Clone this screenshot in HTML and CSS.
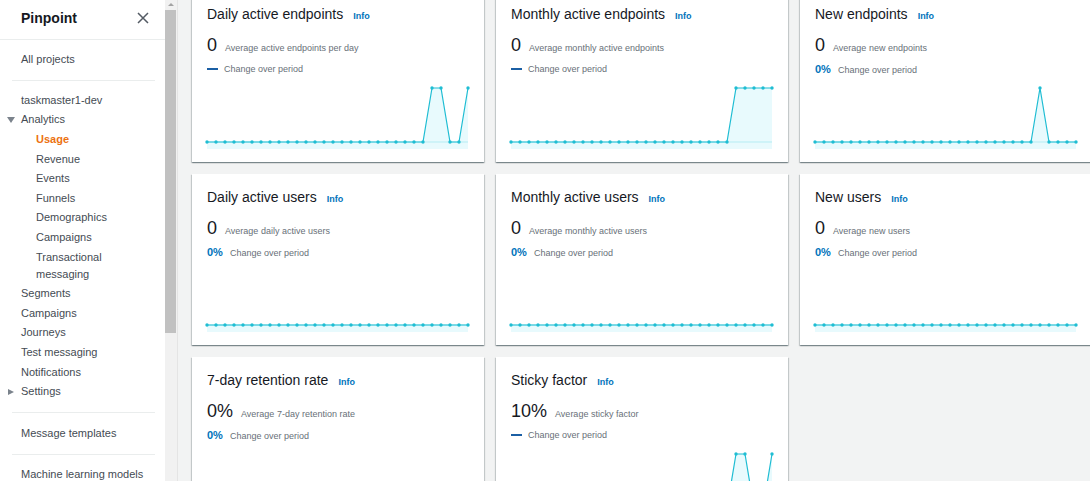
FILE: index.html
```html
<!DOCTYPE html>
<html lang="en">
<head>
<meta charset="utf-8">
<title>Pinpoint - Usage</title>
<link rel="stylesheet" href="styles.css">
</head>
<body>
<svg class="defs" width="0" height="0" aria-hidden="true">
  <defs>
    <marker id="dot" viewBox="0 0 4 4" refX="2" refY="2" markerWidth="3.4" markerHeight="3.4" markerUnits="userSpaceOnUse">
      <circle cx="2" cy="2" r="2" fill="#1fbdd3"/>
    </marker>
  </defs>
</svg>
<div class="app">
  <aside class="sidebar">
    <div class="side-head">
      <span class="brand">Pinpoint</span>
      <svg class="close" width="12" height="12" viewBox="0 0 12 12"><path d="M1 1 L11 11 M11 1 L1 11" stroke="#545b64" stroke-width="1.5" fill="none"/></svg>
    </div>
    <div class="side-sec">
      <div class="nav">All projects</div>
    </div>
    <div class="side-div"></div>
    <div class="side-sec">
      <div class="nav">taskmaster1-dev</div>
      <div class="nav nav-group"><span class="caret caret-down"></span>Analytics</div>
      <div class="nav sub active">Usage</div>
      <div class="nav sub">Revenue</div>
      <div class="nav sub">Events</div>
      <div class="nav sub">Funnels</div>
      <div class="nav sub">Demographics</div>
      <div class="nav sub">Campaigns</div>
      <div class="nav sub">Transactional messaging</div>
      <div class="nav">Segments</div>
      <div class="nav">Campaigns</div>
      <div class="nav">Journeys</div>
      <div class="nav">Test messaging</div>
      <div class="nav">Notifications</div>
      <div class="nav nav-group"><span class="caret caret-right"></span>Settings</div>
    </div>
    <div class="side-div"></div>
    <div class="side-sec sec-wide">
      <div class="nav">Message templates</div>
    </div>
    <div class="side-div"></div>
    <div class="side-sec">
      <div class="nav">Machine learning models</div>
    </div>
  </aside>
  <div class="scrollbar">
    <div class="sb-arrow"></div>
    <div class="sb-thumb"></div>
  </div>
  <main class="main">
    <div class="grid">
      <section class="card">
        <div class="card-title"><h2>Daily active endpoints</h2><span class="info">Info</span></div>
        <div class="metric"><span class="big">0</span><span class="sub-label">Average active endpoints per day</span></div>
        <div class="change"><span class="dash"></span><span class="sub-label">Change over period</span></div>
        <svg class="chart" width="261" height="63" viewBox="0 0 261 63">
          <polygon class="area" points="0,63 0,56 9,56 18,56 27,56 36,56 45,56 54,56 63,56 72,56 81,56 90,56 99,56 108,56 117,56 126,56 135,56 144,56 153,56 162,56 171,56 180,56 189,56 198,56 207,56 216,56 225,2 234,2 243,56 252,56 261,2 261,63"/>
          <line class="zero" x1="0" y1="56" x2="261" y2="56"/>
          <polyline class="series" points="0,56 9,56 18,56 27,56 36,56 45,56 54,56 63,56 72,56 81,56 90,56 99,56 108,56 117,56 126,56 135,56 144,56 153,56 162,56 171,56 180,56 189,56 198,56 207,56 216,56 225,2 234,2 243,56 252,56 261,2"/>
        </svg>
      </section>
      <section class="card">
        <div class="card-title"><h2>Monthly active endpoints</h2><span class="info">Info</span></div>
        <div class="metric"><span class="big">0</span><span class="sub-label">Average monthly active endpoints</span></div>
        <div class="change"><span class="dash"></span><span class="sub-label">Change over period</span></div>
        <svg class="chart" width="261" height="63" viewBox="0 0 261 63">
          <polygon class="area" points="0,63 0,56 9,56 18,56 27,56 36,56 45,56 54,56 63,56 72,56 81,56 90,56 99,56 108,56 117,56 126,56 135,56 144,56 153,56 162,56 171,56 180,56 189,56 198,56 207,56 216,56 225,2 234,2 243,2 252,2 261,2 261,63"/>
          <line class="zero" x1="0" y1="56" x2="261" y2="56"/>
          <polyline class="series" points="0,56 9,56 18,56 27,56 36,56 45,56 54,56 63,56 72,56 81,56 90,56 99,56 108,56 117,56 126,56 135,56 144,56 153,56 162,56 171,56 180,56 189,56 198,56 207,56 216,56 225,2 234,2 243,2 252,2 261,2"/>
        </svg>
      </section>
      <section class="card">
        <div class="card-title"><h2>New endpoints</h2><span class="info">Info</span></div>
        <div class="metric"><span class="big">0</span><span class="sub-label">Average new endpoints</span></div>
        <div class="change"><span class="pct">0%</span><span class="sub-label">Change over period</span></div>
        <svg class="chart" width="261" height="63" viewBox="0 0 261 63">
          <polygon class="area" points="0,63 0,56 9,56 18,56 27,56 36,56 45,56 54,56 63,56 72,56 81,56 90,56 99,56 108,56 117,56 126,56 135,56 144,56 153,56 162,56 171,56 180,56 189,56 198,56 207,56 216,56 225,2 234,56 243,56 252,56 261,56 261,63"/>
          <line class="zero" x1="0" y1="56" x2="261" y2="56"/>
          <polyline class="series" points="0,56 9,56 18,56 27,56 36,56 45,56 54,56 63,56 72,56 81,56 90,56 99,56 108,56 117,56 126,56 135,56 144,56 153,56 162,56 171,56 180,56 189,56 198,56 207,56 216,56 225,2 234,56 243,56 252,56 261,56"/>
        </svg>
      </section>

      <section class="card">
        <div class="card-title"><h2>Daily active users</h2><span class="info">Info</span></div>
        <div class="metric"><span class="big">0</span><span class="sub-label">Average daily active users</span></div>
        <div class="change"><span class="pct">0%</span><span class="sub-label">Change over period</span></div>
        <svg class="chart" width="261" height="63" viewBox="0 0 261 63">
          <rect class="area" x="0" y="56" width="261" height="7"/>
          <line class="zero" x1="0" y1="56" x2="261" y2="56"/>
          <polyline class="series" points="0,56 9,56 18,56 27,56 36,56 45,56 54,56 63,56 72,56 81,56 90,56 99,56 108,56 117,56 126,56 135,56 144,56 153,56 162,56 171,56 180,56 189,56 198,56 207,56 216,56 225,56 234,56 243,56 252,56 261,56"/>
        </svg>
      </section>
      <section class="card">
        <div class="card-title"><h2>Monthly active users</h2><span class="info">Info</span></div>
        <div class="metric"><span class="big">0</span><span class="sub-label">Average monthly active users</span></div>
        <div class="change"><span class="pct">0%</span><span class="sub-label">Change over period</span></div>
        <svg class="chart" width="261" height="63" viewBox="0 0 261 63">
          <rect class="area" x="0" y="56" width="261" height="7"/>
          <line class="zero" x1="0" y1="56" x2="261" y2="56"/>
          <polyline class="series" points="0,56 9,56 18,56 27,56 36,56 45,56 54,56 63,56 72,56 81,56 90,56 99,56 108,56 117,56 126,56 135,56 144,56 153,56 162,56 171,56 180,56 189,56 198,56 207,56 216,56 225,56 234,56 243,56 252,56 261,56"/>
        </svg>
      </section>
      <section class="card">
        <div class="card-title"><h2>New users</h2><span class="info">Info</span></div>
        <div class="metric"><span class="big">0</span><span class="sub-label">Average new users</span></div>
        <div class="change"><span class="pct">0%</span><span class="sub-label">Change over period</span></div>
        <svg class="chart" width="261" height="63" viewBox="0 0 261 63">
          <rect class="area" x="0" y="56" width="261" height="7"/>
          <line class="zero" x1="0" y1="56" x2="261" y2="56"/>
          <polyline class="series" points="0,56 9,56 18,56 27,56 36,56 45,56 54,56 63,56 72,56 81,56 90,56 99,56 108,56 117,56 126,56 135,56 144,56 153,56 162,56 171,56 180,56 189,56 198,56 207,56 216,56 225,56 234,56 243,56 252,56 261,56"/>
        </svg>
      </section>

      <section class="card">
        <div class="card-title"><h2>7-day retention rate</h2><span class="info">Info</span></div>
        <div class="metric"><span class="big">0%</span><span class="sub-label">Average 7-day retention rate</span></div>
        <div class="change"><span class="pct">0%</span><span class="sub-label">Change over period</span></div>
        <svg class="chart" width="261" height="63" viewBox="0 0 261 63">
          <rect class="area" x="0" y="56" width="261" height="7"/>
          <line class="zero" x1="0" y1="56" x2="261" y2="56"/>
          <polyline class="series" points="0,56 9,56 18,56 27,56 36,56 45,56 54,56 63,56 72,56 81,56 90,56 99,56 108,56 117,56 126,56 135,56 144,56 153,56 162,56 171,56 180,56 189,56 198,56 207,56 216,56 225,56 234,56 243,56 252,56 261,56"/>
        </svg>
      </section>
      <section class="card">
        <div class="card-title"><h2>Sticky factor</h2><span class="info">Info</span></div>
        <div class="metric"><span class="big">10%</span><span class="sub-label">Average sticky factor</span></div>
        <div class="change"><span class="dash"></span><span class="sub-label">Change over period</span></div>
        <svg class="chart" width="261" height="63" viewBox="0 0 261 63">
          <polygon class="area" points="0,63 0,56 9,56 18,56 27,56 36,56 45,56 54,56 63,56 72,56 81,56 90,56 99,56 108,56 117,56 126,56 135,56 144,56 153,56 162,56 171,56 180,56 189,56 198,56 207,56 216,56 225,2 234,2 243,56 252,56 261,2 261,63"/>
          <line class="zero" x1="0" y1="56" x2="261" y2="56"/>
          <polyline class="series" points="0,56 9,56 18,56 27,56 36,56 45,56 54,56 63,56 72,56 81,56 90,56 99,56 108,56 117,56 126,56 135,56 144,56 153,56 162,56 171,56 180,56 189,56 198,56 207,56 216,56 225,2 234,2 243,56 252,56 261,2"/>
        </svg>
      </section>
    </div>
  </main>
</div>
</body>
</html>
```
FILE: styles.css
```css
html, body {
  margin: 0;
  padding: 0;
  height: 100%;
  overflow: hidden;
}
body {
  font-family: "Liberation Sans", Arial, sans-serif;
  color: #16191f;
  background: #f2f3f3;
}
.defs {
  position: absolute;
  width: 0;
  height: 0;
}
.app {
  display: flex;
  height: 481px;
}

/* Sidebar */
.sidebar {
  width: 165px;
  flex: none;
  background: #fff;
  box-sizing: border-box;
}
.side-head {
  height: 40px;
  box-sizing: border-box;
  padding: 0 16px 4px 21px;
  display: flex;
  align-items: center;
  justify-content: space-between;
  border-bottom: 1px solid #eaeded;
}
.brand {
  font-size: 14px;
  font-weight: 700;
  color: #16191f;
}
.close {
  display: block;
}
.side-sec {
  padding: 10px 12px 10px 0;
}
.side-sec.sec-wide {
  padding: 11px 12px 11px 0;
}
.side-div {
  margin: 0 10px 0 12px;
  border-top: 1px solid #eaeded;
}
.nav {
  font-size: 11px;
  line-height: 17px;
  padding: 1.3px 0 1.3px 21px;
  color: #444b53;
}
.nav.sub {
  padding-left: 36px;
}
.nav.active {
  color: #ec7211;
  font-weight: 700;
}
.nav-group {
  display: flex;
  align-items: center;
  padding-left: 7px;
}
.caret {
  width: 8px;
  height: 8px;
  margin-right: 6px;
  display: flex;
  align-items: center;
  justify-content: center;
}
.caret-down::before {
  content: "";
  border-left: 4px solid transparent;
  border-right: 4px solid transparent;
  border-top: 6px solid #7b838c;
}
.caret-right::before {
  content: "";
  border-top: 3.5px solid transparent;
  border-bottom: 3.5px solid transparent;
  border-left: 6px solid #7b838c;
}

/* Scrollbar */
.scrollbar {
  width: 12px;
  flex: none;
  background: #f1f1f1;
  border-right: 1px solid #e4e4e4;
  display: flex;
  flex-direction: column;
}
.sb-arrow {
  height: 10px;
  display: flex;
  justify-content: center;
  padding-top: 3px;
  box-sizing: border-box;
}
.sb-arrow::before {
  content: "";
  width: 0;
  height: 0;
  border-left: 3px solid transparent;
  border-right: 3px solid transparent;
  border-bottom: 3px solid #a3a3a3;
}
.sb-thumb {
  height: 323px;
  width: 11px;
  background: #c1c1c1;
}

/* Main */
.main {
  flex: 1;
  min-width: 0;
  overflow: hidden;
  background: #f2f3f3;
  padding-left: 14px;
}
.grid {
  display: grid;
  grid-template-columns: repeat(3, 292px);
  grid-auto-rows: 171px;
  gap: 12px;
  margin-top: -9px;
}
.card {
  background: #fff;
  box-sizing: border-box;
  padding: 13.5px 15px 0;
  box-shadow: 0 1px 1px 0 rgba(0, 28, 36, 0.3), 1px 1px 1px 0 rgba(0, 28, 36, 0.15), -1px 1px 1px 0 rgba(0, 28, 36, 0.15);
  display: flex;
  flex-direction: column;
}
.card-title {
  display: flex;
  align-items: baseline;
  gap: 10px;
  height: 18px;
  line-height: 18px;
}
.card-title h2 {
  margin: 0;
  font-size: 14px;
  font-weight: 400;
  color: #16191f;
}
.info {
  font-size: 9px;
  line-height: 11px;
  font-weight: 700;
  color: #0073bb;
}
.metric {
  margin-top: 10.5px;
  display: flex;
  align-items: baseline;
  gap: 8px;
  height: 24px;
  line-height: 24px;
}
.big {
  font-size: 18px;
  color: #16191f;
}
.sub-label {
  font-size: 9px;
  line-height: 11px;
  color: #687078;
}
.change {
  margin-top: 5px;
  display: flex;
  align-items: baseline;
  gap: 7px;
  line-height: 14px;
  height: 14px;
}
.change .sub-label {
  line-height: 15px;
}
.pct {
  font-size: 11px;
  font-weight: 700;
  color: #0073bb;
}
.dash {
  align-self: center;
  width: 11px;
  height: 2px;
  background: #1b5fa4;
  margin-right: -1px;
}
.chart {
  margin-top: 10px;
  display: block;
  overflow: visible;
  flex: none;
}
.chart .area {
  fill: #e8fafd;
  stroke: none;
}
.chart .zero {
  stroke: #b5ecf3;
  stroke-width: 1;
}
.chart .series {
  fill: none;
  stroke: #1fbdd3;
  stroke-width: 1.2;
  marker-start: url(#dot);
  marker-mid: url(#dot);
  marker-end: url(#dot);
}
```
